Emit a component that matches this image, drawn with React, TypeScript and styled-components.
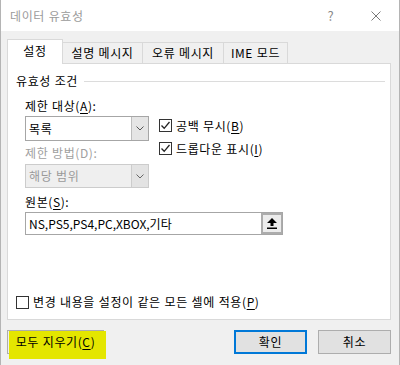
import React from "react";
import styled, { createGlobalStyle } from "styled-components";

const GlobalStyle = createGlobalStyle`
  html, body { margin: 0; padding: 0; }
  body {
    font-family: "Noto Sans CJK KR", "Noto Sans", sans-serif;
    font-size: 12px;
    letter-spacing: 0.6px;
    word-spacing: 0.5px;
    color: #000;
  }
`;

const Window = styled.div`
  width: 400px;
  height: 365px;
  box-sizing: border-box;
  border-left: 1px solid #b4b4b4;
  border-right: 1px solid #b4b4b4;
  background: #f0f0f0;
  display: flex;
  flex-direction: column;
  overflow: hidden;
`;

const TitleBar = styled.div`
  height: 31px;
  flex: none;
  background: #fff;
  display: flex;
  align-items: center;
  padding: 0 18px 0 9px;
  color: #9a9a9a;
  line-height: 16px;
`;

const TitleText = styled.span`
  flex: 1;
`;

const HelpMark = styled.span`
  width: 10px;
  text-align: center;
  color: #8a8a8a;
  font-size: 13px;
  margin-right: 35px;
`;

const Body = styled.div`
  flex: 1;
  display: flex;
  flex-direction: column;
  padding: 8px 8px 0 6px;
`;

const TabStrip = styled.div`
  display: flex;
  align-items: flex-end;
  height: 24px;
`;

const Tab = styled.div<{ $w: number; $active?: boolean }>`
  box-sizing: border-box;
  width: ${(p) => p.$w}px;
  height: ${(p) => (p.$active ? 25 : 21)}px;
  margin-bottom: ${(p) => (p.$active ? -1 : 0)}px;
  margin-left: -1px;
  &:first-child { margin-left: 0; }
  position: relative;
  z-index: ${(p) => (p.$active ? 1 : 0)};
  background: ${(p) => (p.$active ? "#fff" : "#f0f0f0")};
  border: 1px solid #d9d9d9;
  border-bottom: none;
  display: flex;
  align-items: center;
  justify-content: center;
  padding-bottom: ${(p) => (p.$active ? 2 : 0)}px;
  line-height: 16px;
  white-space: nowrap;
`;

const Panel = styled.div`
  box-sizing: border-box;
  height: 257px;
  background: #fff;
  border: 1px solid #d9d9d9;
  display: flex;
  flex-direction: column;
  padding: 9px 5px 9px 8px;
`;

const GroupHeader = styled.div`
  display: flex;
  align-items: center;
  gap: 6px;
  height: 16px;
  line-height: 16px;
  &::after {
    content: "";
    flex: 1;
    height: 1px;
    background: #dcdcdc;
  }
`;

const Fields = styled.div`
  margin-left: 9px;
  margin-top: 9px;
  display: flex;
  flex-direction: column;
`;

const TopRow = styled.div`
  display: flex;
`;

const LeftCol = styled.div`
  width: 124px;
  display: flex;
  flex-direction: column;
`;

const RightCol = styled.div`
  margin-left: 10px;
  padding-top: 21px;
  display: flex;
  flex-direction: column;
  gap: 10px;
`;

const Label = styled.div<{ $disabled?: boolean; $gap?: number }>`
  height: 16px;
  line-height: 16px;
  margin-top: ${(p) => p.$gap ?? 0}px;
  color: ${(p) => (p.$disabled ? "#a0a0a0" : "#000")};
  white-space: nowrap;
`;

const Key = styled.span`
  text-decoration: underline;
  text-underline-offset: 2px;
`;

const Combo = styled.div<{ $disabled?: boolean; $gap?: number; $h: number }>`
  box-sizing: border-box;
  height: ${(p) => p.$h}px;
  margin-top: ${(p) => p.$gap ?? 0}px;
  border: 1px solid ${(p) => (p.$disabled ? "#cccccc" : "#a6a6a6")};
  background: ${(p) => (p.$disabled ? "#efefef" : "#fff")};
  color: ${(p) => (p.$disabled ? "#9a9a9a" : "#000")};
  display: flex;
  align-items: stretch;
`;

const ComboText = styled.div`
  flex: 1;
  padding-left: 3px;
  display: flex;
  align-items: center;
  line-height: 16px;
`;

const ComboArrow = styled.div<{ $disabled?: boolean }>`
  width: 16px;
  background: ${(p) => (p.$disabled ? "#e3e3e3" : "#e5e5e5")};
  border-left: 1px solid ${(p) => (p.$disabled ? "#cccccc" : "#bdbdbd")};
  display: flex;
  align-items: center;
  justify-content: center;
`;

const CheckRow = styled.label`
  display: flex;
  align-items: center;
  gap: 4px;
  height: 13px;
  line-height: 16px;
  white-space: nowrap;
`;

const Box = styled.span`
  box-sizing: border-box;
  width: 13px;
  height: 13px;
  flex: none;
  border: 1px solid #333;
  background: #fff;
  display: flex;
  align-items: center;
  justify-content: center;
`;

const SourceInput = styled.div`
  box-sizing: border-box;
  margin-top: 2px;
  width: 258px;
  height: 23px;
  border: 1px solid #a6a6a6;
  display: flex;
  align-items: stretch;
`;

const SourceText = styled.div`
  flex: 1;
  padding-left: 3px;
  display: flex;
  align-items: center;
  line-height: 16px;
  letter-spacing: 0;
`;

const RefButton = styled.div`
  box-sizing: border-box;
  width: 21px;
  border: 2px solid #acacac;
  border-right-width: 1px;
  background: #ececec;
  display: flex;
  align-items: center;
  justify-content: center;
`;

const BottomCheck = styled(CheckRow)`
  margin-top: auto;
  height: 16px;
`;

const Footer = styled.div`
  display: flex;
  align-items: center;
  margin-top: 10px;
`;

const Button = styled.div<{ $w: number; $primary?: boolean }>`
  box-sizing: border-box;
  width: ${(p) => p.$w}px;
  height: 24px;
  border: ${(p) => (p.$primary ? "2px solid #0078d7" : "1px solid #adadad")};
  background: #e1e1e1;
  display: flex;
  align-items: center;
  justify-content: center;
  line-height: 16px;
  white-space: nowrap;
`;

const ClearButton = styled(Button)`
  position: relative;
  background: transparent;
  margin-right: auto;
  z-index: 0;
  &::before {
    content: "";
    position: absolute;
    left: 1px;
    top: 0;
    right: -3px;
    bottom: -6px;
    background: #e4e600;
    z-index: -1;
  }
`;

const CancelButton = styled(Button)`
  margin-left: 11px;
`;

const Chevron = ({ color }: { color: string }) => (
  <svg width="8" height="5" viewBox="0 0 8 5">
    <polyline points="0.5,0.5 4,4 7.5,0.5" fill="none" stroke={color} strokeWidth="1" />
  </svg>
);

const Check = () => (
  <svg width="11" height="11" viewBox="0 0 11 11">
    <polyline points="1.5,5.5 4.2,8.3 9.5,2" fill="none" stroke="#222" strokeWidth="1.3" />
  </svg>
);

const UpArrow = () => (
  <svg width="10" height="11" viewBox="0 0 10 11">
    <polygon points="5,0 10,5 6.5,5 6.5,8 3.5,8 3.5,5 0,5" fill="#000" />
    <rect x="0" y="9.5" width="10" height="1.5" fill="#000" />
  </svg>
);

const CloseIcon = () => (
  <svg width="10" height="10" viewBox="0 0 10 10">
    <line x1="0.5" y1="0.5" x2="9.5" y2="9.5" stroke="#7a7a7a" strokeWidth="1" />
    <line x1="9.5" y1="0.5" x2="0.5" y2="9.5" stroke="#7a7a7a" strokeWidth="1" />
  </svg>
);

export default function App() {
  return (
    <>
      <GlobalStyle />
      <Window>
        <TitleBar>
          <TitleText>데이터 유효성</TitleText>
          <HelpMark>?</HelpMark>
          <CloseIcon />
        </TitleBar>
        <Body>
          <TabStrip>
            <Tab $w={56} $active>설정</Tab>
            <Tab $w={81}>설명 메시지</Tab>
            <Tab $w={82}>오류 메시지</Tab>
            <Tab $w={65}>IME 모드</Tab>
          </TabStrip>
          <Panel>
            <GroupHeader>유효성 조건</GroupHeader>
            <Fields>
              <TopRow>
                <LeftCol>
                  <Label>
                    제한 대상(<Key>A</Key>):
                  </Label>
                  <Combo $h={25} $gap={2}>
                    <ComboText>목록</ComboText>
                    <ComboArrow>
                      <Chevron color="#555" />
                    </ComboArrow>
                  </Combo>
                  <Label $disabled $gap={4}>
                    제한 방법(D):
                  </Label>
                  <Combo $h={24} $gap={3} $disabled>
                    <ComboText>해당 범위</ComboText>
                    <ComboArrow $disabled>
                      <Chevron color="#666" />
                    </ComboArrow>
                  </Combo>
                </LeftCol>
                <RightCol>
                  <CheckRow>
                    <Box>
                      <Check />
                    </Box>
                    <span>
                      공백 무시(<Key>B</Key>)
                    </span>
                  </CheckRow>
                  <CheckRow>
                    <Box>
                      <Check />
                    </Box>
                    <span>
                      드롭다운 표시(<Key>I</Key>)
                    </span>
                  </CheckRow>
                </RightCol>
              </TopRow>
              <Label $gap={6}>
                원본(<Key>S</Key>):
              </Label>
              <SourceInput>
                <SourceText>NS,PS5,PS4,PC,XBOX,기타</SourceText>
                <RefButton>
                  <UpArrow />
                </RefButton>
              </SourceInput>
            </Fields>
            <BottomCheck>
              <Box />
              <span>
                변경 내용을 설정이 같은 모든 셀에 적용(<Key>P</Key>)
              </span>
            </BottomCheck>
          </Panel>
          <Footer>
            <ClearButton $w={97}>
              <span>
                모두 지우기(<Key>C</Key>)
              </span>
            </ClearButton>
            <Button $w={73} $primary>
              확인
            </Button>
            <CancelButton $w={73}>취소</CancelButton>
          </Footer>
        </Body>
      </Window>
    </>
  );
}
